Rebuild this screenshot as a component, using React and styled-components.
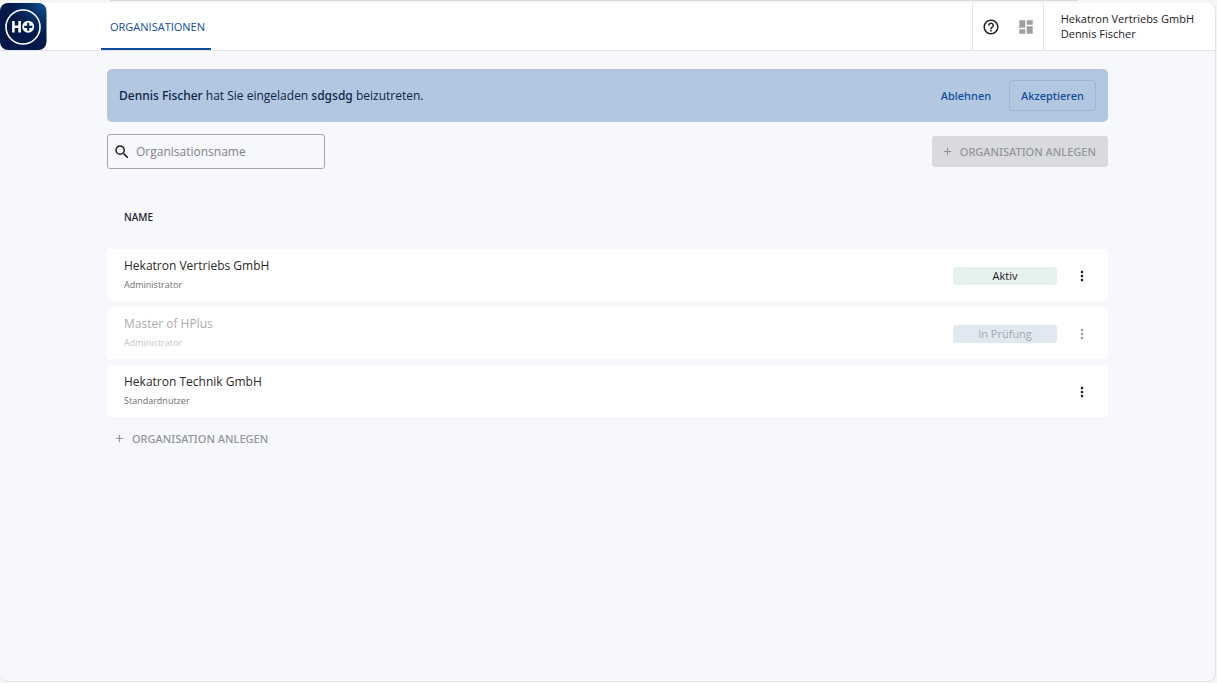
import { useState } from 'react';
import styled, { createGlobalStyle } from 'styled-components';
import { MdAdd, MdDashboard, MdHelpOutline, MdMoreVert, MdSearch } from 'react-icons/md';

const organisations = [
  { id: 1, name: 'Hekatron Vertriebs GmbH', role: 'Administrator', status: 'Aktiv', color: '#e6f2ed' },
  { id: 2, name: 'Master of HPlus', role: 'Administrator', status: 'In Prüfung', color: '#b4c7e0', disabled: true },
  { id: 3, name: 'Hekatron Technik GmbH', role: 'Standardnutzer' },
];

function Logo() {
  return (
    <svg width="47" height="47" viewBox="0 0 47 47" role="img" aria-label="Hekatron HPlus">
      <defs>
        <radialGradient id="logoGlow" cx="1" cy="0" r="0.75">
          <stop offset="0" stopColor="#0a5596" />
          <stop offset="0.5" stopColor="#063067" />
          <stop offset="1" stopColor="#02194a" />
        </radialGradient>
      </defs>
      <rect width="46.5" height="47" rx="8" fill="url(#logoGlow)" />
      <circle cx="23" cy="24" r="17" fill="none" stroke="#fff" strokeWidth="1.6" />
      <path d="M13.4 18v11.6M19.6 18v11.6M13.4 23.8h6.2" fill="none" stroke="#fff" strokeWidth="2.6" />
      <circle cx="28.2" cy="23.8" r="6" fill="#fff" />
      <path d="M28.2 19.8v8M24.2 23.8h8" fill="none" stroke="#04225a" strokeWidth="2.2" />
    </svg>
  );
}

function OrganisationRow({ organisation }) {
  const { name, role, status, color, disabled } = organisation;
  return (
    <Row $disabled={disabled}>
      <Cell>
        <Name>{name}</Name>
        <Role>{role}</Role>
      </Cell>
      <StatusCell>{status && <Badge $color={color}>{status}</Badge>}</StatusCell>
      <ActionCell>
        <IconButton type="button" aria-label={`Aktionen für ${name}`} disabled={disabled}>
          <MdMoreVert size={16} />
        </IconButton>
      </ActionCell>
    </Row>
  );
}

function App() {
  const [search, setSearch] = useState('');
  const rows = organisations.filter((o) => o.name.toLowerCase().includes(search.toLowerCase()));

  return (
    <>
      <GlobalStyle />
      <TopLine />
      <Window>
        <Header>
          <Logo />
          <Nav>
            <Tab href="#organisationen">ORGANISATIONEN</Tab>
          </Nav>
          <Tools>
            <IconButton type="button" aria-label="Hilfe">
              <MdHelpOutline size={18} />
            </IconButton>
            <IconButton type="button" aria-label="Anwendungen" disabled>
              <MdDashboard size={18} />
            </IconButton>
          </Tools>
          <Account>
            <span>Hekatron Vertriebs GmbH</span>
            <span>Dennis Fischer</span>
          </Account>
        </Header>

        <Content>
          <Invitation>
            <InvitationText>
              <b>Dennis Fischer</b> hat Sie eingeladen <b>sdgsdg</b> beizutreten.
            </InvitationText>
            <TextButton type="button">Ablehnen</TextButton>
            <OutlineButton type="button">Akzeptieren</OutlineButton>
          </Invitation>

          <Toolbar>
            <SearchBox>
              <MdSearch size={18} />
              <SearchInput
                aria-label="Organisationsname"
                placeholder="Organisationsname"
                value={search}
                onChange={(e) => setSearch(e.target.value)}
              />
            </SearchBox>
            <AddButton type="button" $filled disabled>
              <MdAdd size={13} />
              ORGANISATION ANLEGEN
            </AddButton>
          </Toolbar>

          <Table>
            <thead>
              <tr>
                <HeadCell scope="col">NAME</HeadCell>
                <HeadCell as="td" />
                <HeadCell as="td" />
              </tr>
            </thead>
            <tbody>
              {rows.map((o) => (
                <OrganisationRow key={o.id} organisation={o} />
              ))}
            </tbody>
          </Table>

          <AddButton type="button" disabled>
            <MdAdd size={13} />
            ORGANISATION ANLEGEN
          </AddButton>
        </Content>
      </Window>
    </>
  );
}

export default App;

// Open Sans has no medium weight here, Noto Sans does
const mediumFont = '"Noto Sans", "Open Sans", sans-serif';

const GlobalStyle = createGlobalStyle`
  * {
    box-sizing: border-box;
  }

  html {
    height: 100%;
  }

  body {
    margin: 0;
    min-height: 100%;
    background: #f5f5f5;
    color: #212121;
    font-family: "Open Sans", "Noto Sans", sans-serif;
    font-size: 12px;
  }

  button, input {
    font: inherit;
  }
`;

const TopLine = styled.div`
  height: 1px;
  margin: 0 139px 2px 110px;
  background: #d9d9d9;
`;

const Window = styled.div`
  min-height: calc(100vh - 4px);
  margin-right: 1px;
  border-right: 1px solid #e2e3e6;
  border-bottom: 1px solid #e2e3e6;
  border-radius: 8px;
  background: #f7f8fc;
`;

const Header = styled.header`
  display: flex;
  border-bottom: 1px solid #e2e3e6;
  border-radius: 8px 8px 0 0;
  background: #fff;
`;

const Nav = styled.nav`
  display: flex;
  flex: 1;
  margin-left: 54px;
`;

const Tab = styled.a`
  display: flex;
  align-items: center;
  padding: 2px 6px 0 9px;
  border-bottom: 2px solid #0f4c99;
  color: #0f4c99;
  font-size: 11px;
  text-decoration: none;
`;

const Tools = styled.div`
  display: flex;
  align-items: center;
  gap: 11px;
  padding: 0 5px 0 6px;
  border-left: 1px solid #e2e3e6;
  border-right: 1px solid #e2e3e6;
`;

const IconButton = styled.button`
  display: inline-flex;
  align-items: center;
  justify-content: center;
  width: 24px;
  height: 24px;
  padding: 0;
  border: 0;
  background: none;
  color: #212121;
  cursor: pointer;

  &:disabled {
    color: #9e9e9e;
    cursor: default;
  }
`;

const Account = styled.div`
  display: flex;
  flex-direction: column;
  justify-content: center;
  padding: 0 21px 1px 17px;
  font-size: 11px;
  line-height: 15px;
`;

const Content = styled.main`
  padding: 18px 107px 24px;
`;

const Invitation = styled.section`
  display: flex;
  align-items: center;
  padding: 11px 12px;
  border-radius: 5px;
  background: #b4c7e0;
`;

const InvitationText = styled.p`
  flex: 1;
  margin: 0;
  color: #0b2447;

  b {
    font-family: ${mediumFont};
    font-weight: 500;
  }
`;

const TextButton = styled.button`
  height: 31px;
  padding: 0 11px;
  border: 1px solid transparent;
  border-radius: 3px;
  background: none;
  color: #0f4c99;
  font-family: ${mediumFont};
  font-size: 11px;
  font-weight: 500;
  cursor: pointer;
`;

const OutlineButton = styled(TextButton)`
  margin-left: 6px;
  border-color: #9fb5d1;
`;

const Toolbar = styled.div`
  display: flex;
  align-items: center;
  justify-content: space-between;
  margin-top: 12px;
`;

const SearchBox = styled.label`
  display: flex;
  align-items: center;
  gap: 5px;
  width: 218px;
  height: 35px;
  padding: 0 5px;
  border: 1px solid #a5a7ab;
  border-radius: 3px;
`;

const SearchInput = styled.input`
  flex: 1;
  min-width: 0;
  padding: 0;
  border: 0;
  outline: 0;
  background: none;
  color: #212121;

  &::placeholder {
    color: #808286;
  }
`;

const AddButton = styled.button`
  display: flex;
  align-items: center;
  gap: 6px;
  height: 31px;
  padding: ${({ $filled }) => ($filled ? '0 12px 0 9px' : '0 6px')};
  border: 0;
  border-radius: 3px;
  background: ${({ $filled }) => ($filled ? '#d9dadd' : 'none')};
  color: #939598;
  font-family: ${mediumFont};
  font-size: 11px;
  font-weight: 500;
`;

const Table = styled.table`
  width: 100%;
  margin-top: 18px;
  border-collapse: separate;
  border-spacing: 0 6px;
`;

const HeadCell = styled.th`
  height: 50px;
  padding: 0 18px 2px 17px;
  font-family: ${mediumFont};
  font-size: 10px;
  font-weight: 500;
  text-align: left;
`;

const Cell = styled.td`
  height: 52px;
  padding: 0 18px 2px 17px;
  background: #fff;

  &:first-child {
    border-radius: 3px 0 0 3px;
  }

  &:last-child {
    border-radius: 0 3px 3px 0;
  }
`;

const StatusCell = styled(Cell)`
  width: 116px;
  padding: 1px 12px 0 0;
`;

const ActionCell = styled(Cell)`
  width: 39px;
  padding: 1px 14px 0 0;
  text-align: right;

  ${IconButton} {
    vertical-align: middle;
  }
`;

const Row = styled.tr`
  ${Cell} > * {
    opacity: ${({ $disabled }) => ($disabled ? 0.4 : 1)};
  }

  ${Cell} > ${IconButton} {
    opacity: 1;
  }
`;

const Name = styled.div`
  color: #2b2b2b;
  line-height: 18px;
`;

const Role = styled.div`
  padding-top: 4px;
  color: #6f6f6f;
  font-size: 9px;
  line-height: 12px;
`;

const Badge = styled.div`
  border-radius: 3px;
  background: ${({ $color }) => $color};
  font-size: 11px;
  line-height: 18px;
  text-align: center;
`;
